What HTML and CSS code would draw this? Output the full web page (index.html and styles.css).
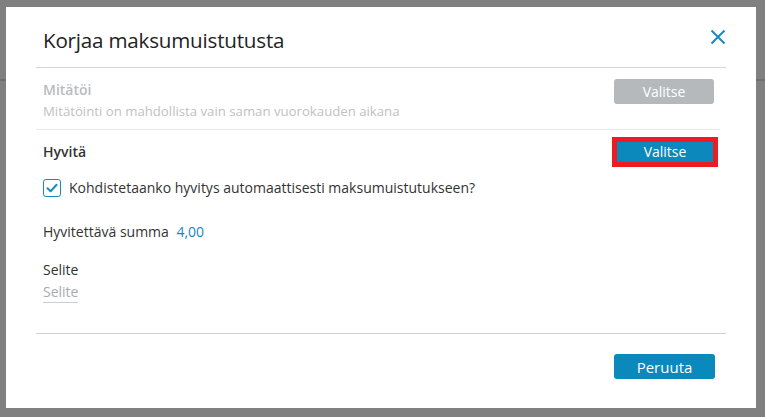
FILE: index.html
```html
<!DOCTYPE html>
<html>
<head>
  <title>Korjaa maksumuistutusta</title>
  <link rel="stylesheet" href="styles.css">
</head>
<body>
  <div class="modal">
    <div class="modal-header">
      <h2>Korjaa maksumuistutusta</h2>
      <button class="close" aria-label="Sulje">
        <svg width="16" height="16" viewBox="0 0 16 16">
          <path d="M1.5 1.5 L14.5 14.5 M14.5 1.5 L1.5 14.5" stroke="#1a8bc0" stroke-width="2" fill="none" />
        </svg>
      </button>
    </div>

    <div class="option disabled">
      <div class="option-row">
        <div>
          <div class="option-title">Mitätöi</div>
          <div class="option-desc">Mitätöinti on mahdollista vain saman vuorokauden aikana</div>
        </div>
        <button class="btn btn-grey">Valitse</button>
      </div>
    </div>

    <div class="option active">
      <div class="option-row">
        <div class="option-title">Hyvitä</div>
        <button class="btn btn-blue selected">Valitse</button>
      </div>

      <label class="check">
        <span class="check-box">
          <svg width="14" height="14" viewBox="0 0 14 14">
            <path d="M2.5 7.2 L5.6 10.2 L11.6 3.8" stroke="#1a8bc0" stroke-width="2" fill="none" stroke-linecap="round" stroke-linejoin="round" />
          </svg>
        </span>
        Kohdistetaanko hyvitys automaattisesti maksumuistutukseen?
      </label>

      <div class="amount">Hyvitettävä summa <span class="value">4,00</span></div>

      <div class="field">
        <div class="field-label">Selite</div>
        <div class="field-input">Selite</div>
      </div>
    </div>

    <div class="modal-footer">
      <button class="btn btn-blue cancel">Peruuta</button>
    </div>
  </div>
</body>
</html>
```

FILE: styles.css
```css
body {
  margin: 0;
  height: 417px;
  overflow: hidden;
  font-family: 'Open Sans', sans-serif;
  color: #333;
  background-color: #808080;
  background-image: linear-gradient(#6f6f6f, #6f6f6f);
  background-size: 100% 2px;
  background-position: 0 79px;
  background-repeat: no-repeat;
}

.modal {
  margin: 7px 0 0 6px;
  width: 750px;
  height: 401px;
  background: white;
  padding: 0 30px;
  box-sizing: border-box;
  display: flex;
  flex-direction: column;
}

.modal-header {
  height: 60px;
  display: flex;
  align-items: center;
  justify-content: space-between;
  border-bottom: 1px solid #d4d7db;
  padding: 0 0 0 7px;
}

.modal-header h2 {
  margin: 6px 0 0 0;
  font-size: 20.6px;
  font-weight: 400;
  color: #222;
  letter-spacing: -0.2px;
}

.close {
  background: none;
  border: 0;
  padding: 0;
  width: 16px;
  height: 16px;
  cursor: pointer;
}

.option {
  padding: 0 0 0 7px;
}

.option.disabled {
  height: 62px;
  border-bottom: 1px solid #e6e8eb;
  margin-right: 6px;
  padding-top: 11px;
  box-sizing: border-box;
}

.option-row {
  display: flex;
  justify-content: space-between;
  align-items: flex-start;
}

.option.disabled .option-row {
  padding-right: 6px;
}

.option-title {
  font-size: 14px;
  font-weight: 600;
  line-height: 20px;
}

.disabled .option-title {
  color: #b9bcbf;
  margin-top: 1px;
}

.option-desc {
  font-size: 13.2px;
  color: #bfc1c3;
  line-height: 18px;
  margin-top: 2px;
}

.btn {
  border: 0;
  color: white;
  font-family: 'Open Sans', sans-serif;
  font-size: 14px;
  cursor: pointer;
  padding: 0;
}

.btn-grey {
  width: 100px;
  height: 25px;
  border-radius: 3px;
  background: #b5b9bc;
}

.btn-blue {
  background: #0b88bc;
}

.option.active {
  padding-top: 12px;
}

.active .option-row {
  padding-right: 13px;
  align-items: center;
}

.active .option-title {
  color: #333;
}

.selected {
  width: 96px;
  height: 20px;
  outline: 5px solid #ed1c24;
  line-height: 20px;
}

.check {
  display: flex;
  align-items: center;
  margin-top: 16px;
  font-size: 14px;
  gap: 8px;
}

.check-box {
  width: 18px;
  height: 18px;
  box-sizing: border-box;
  border: 1.5px solid #1a8bc0;
  border-radius: 3px;
  display: flex;
  align-items: center;
  justify-content: center;
}

.amount {
  margin-top: 25px;
  font-size: 14px;
}

.amount .value {
  color: #1a85c0;
  margin-left: 4px;
}

.field {
  margin-top: 19px;
  font-size: 14px;
}

.field-input {
  color: #a9acaf;
  display: inline-block;
  border-bottom: 1px solid #c9cdd1;
  line-height: 20px;
  margin-top: 3px;
}

.modal-footer {
  margin-top: auto;
  height: 75px;
  border-top: 1px solid #cdd1d5;
  display: flex;
  justify-content: flex-end;
  padding: 20px 11px 0 0;
  box-sizing: border-box;
}

.cancel {
  width: 101px;
  height: 25px;
  border-radius: 3px;
  font-size: 15px;
}
```
